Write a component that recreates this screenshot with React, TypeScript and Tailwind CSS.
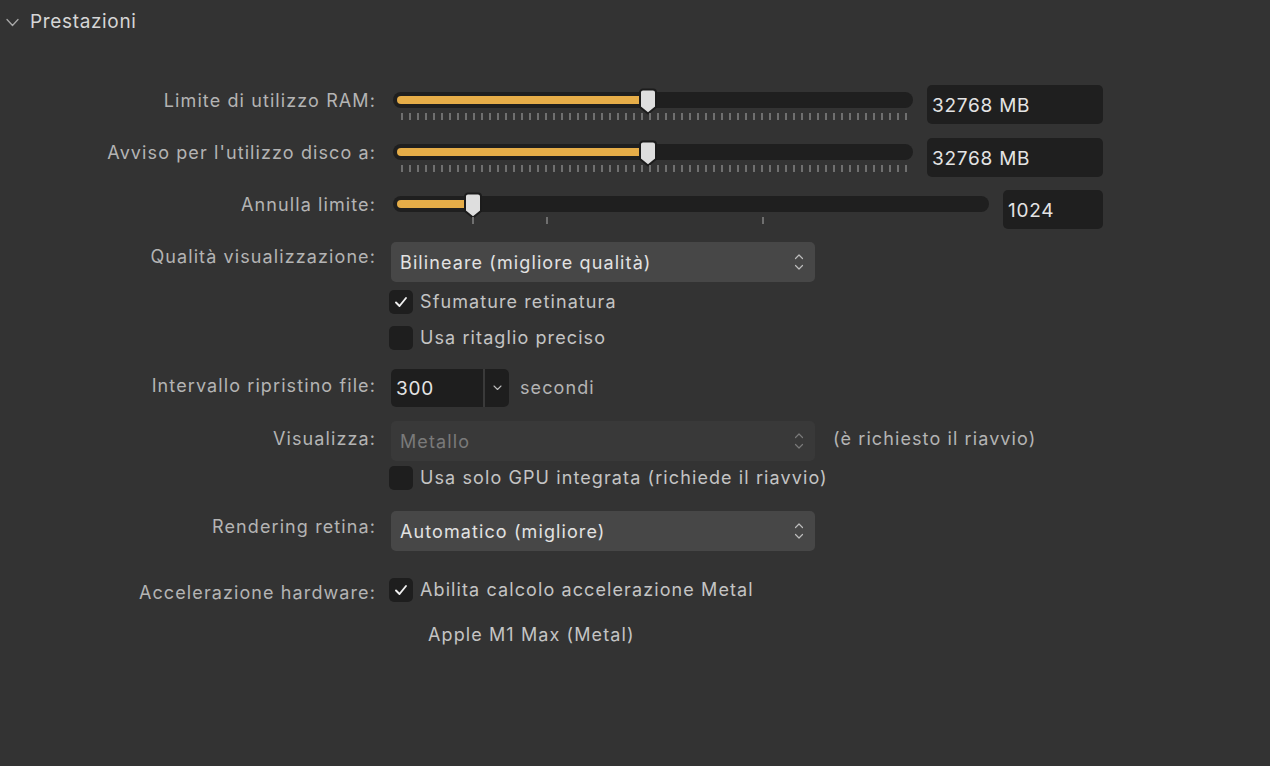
import React from "react";

const Thumb = () => (
  <svg width="18" height="27" viewBox="0 0 18 27" className="block">
    <path d="M4 1.5 H14 A3 3 0 0 1 17 4.5 V19 L9 25.5 L1 19 V4.5 A3 3 0 0 1 4 1.5 Z" fill="#dedede" stroke="#1c1c1c" strokeWidth="2" strokeLinejoin="round" />
  </svg>
);

const UpDown = ({ color = "#bdbdbd" }: { color?: string }) => (
  <svg width="10" height="18" viewBox="0 0 10 18" className="block">
    <path d="M1.5 5.5 L5 2 L8.5 5.5" fill="none" stroke={color} strokeWidth="1.2" strokeLinecap="round" strokeLinejoin="round" />
    <path d="M1.5 12.5 L5 16 L8.5 12.5" fill="none" stroke={color} strokeWidth="1.2" strokeLinecap="round" strokeLinejoin="round" />
  </svg>
);

const Check = () => (
  <svg width="14" height="12" viewBox="0 0 14 12" className="block">
    <path d="M2 6.5 L5.5 10 L12 2" fill="none" stroke="#f0f0f0" strokeWidth="1.9" strokeLinecap="round" strokeLinejoin="round" />
  </svg>
);

function Slider({ width, fill, ticks }: { width: number; fill: number; ticks: number[] }) {
  return (
    <div className="relative" style={{ width }}>
      <div className="h-[16px] rounded-full bg-[#1f1f1f] flex items-center px-[4px]">
        <div className="h-[8px] rounded-l-full bg-[#e6ad48]" style={{ width: fill - 4 }} />
      </div>
      <div className="absolute top-[-4px]" style={{ left: fill - 9 }}>
        <Thumb />
      </div>
      <div className="relative h-[8px] mt-[5px]">
        {ticks.map((t, i) => (
          <div key={i} className="absolute top-0 w-[2px] h-[7px] bg-[#6f6f6f]" style={{ left: t - 1 }} />
        ))}
      </div>
    </div>
  );
}

const Label = ({ children, pt }: { children: React.ReactNode; pt: number }) => (
  <div className="w-[376px] shrink-0 text-right text-[18px] leading-[22px] tracking-[1.1px] text-[#b4b4b4]" style={{ paddingTop: pt }}>
    {children}
  </div>
);

const CheckBox = ({ checked, label }: { checked: boolean; label: string }) => (
  <div className="flex items-center h-[24px]">
    <div className="w-[24px] h-[24px] rounded-[5px] bg-[#1e1e1e] flex items-center justify-center">
      {checked && <Check />}
    </div>
    <span className="ml-[7px] text-[18px] leading-[22px] tracking-[1.1px] text-[#c4c4c4]">{label}</span>
  </div>
);

const Dropdown = ({ text, disabled }: { text: string; disabled?: boolean }) => (
  <div
    className={
      "w-[424px] h-[40px] rounded-[5px] flex items-center justify-between pl-[9px] pr-[11px] " +
      (disabled ? "bg-[#393939]" : "bg-[#474747]")
    }
  >
    <span className={"text-[18px] leading-[22px] tracking-[1.1px] pt-[2px] " + (disabled ? "text-[#7a7a7a]" : "text-[#e2e2e2]")}>{text}</span>
    <UpDown color={disabled ? "#7a7a7a" : "#bdbdbd"} />
  </div>
);

const NumBox = ({ text, width }: { text: string; width: number }) => (
  <div className="h-[39px] rounded-[5px] bg-[#1f1f1f] flex items-center pl-[5px]" style={{ width }}>
    <span className="text-[19px] leading-[22px] tracking-[0.75px] text-[#e4e4e4] pt-[2px]">{text}</span>
  </div>
);

export default function App() {
  const bigTicks = Array.from({ length: 64 }, (_, i) => 9 + i * 8);
  return (
    <div className="w-[1270px] h-[766px] bg-[#333333] overflow-hidden font-['Inter',sans-serif] antialiased">
      <div className="flex items-center h-[44px] pl-[6px]">
        <svg width="13" height="9" viewBox="0 0 13 9" className="block">
          <path d="M1 1.5 L6.5 7.5 L12 1.5" fill="none" stroke="#a8a8a8" strokeWidth="1.3" strokeLinecap="round" strokeLinejoin="round" />
        </svg>
        <span className="ml-[11px] text-[19px] leading-[24px] tracking-[0.65px] text-[#d6d6d6]">Prestazioni</span>
      </div>

      <div className="flex flex-col">
        {/* RAM */}
        <div className="flex items-start h-[39px] mt-[41px]">
          <Label pt={5}>Limite di utilizzo RAM:</Label>
          <div className="ml-[17px] pt-[7px]">
            <Slider width={520} fill={255} ticks={bigTicks} />
          </div>
          <div className="ml-[14px]">
            <NumBox text="32768 MB" width={176} />
          </div>
        </div>

        {/* Disk */}
        <div className="flex items-start h-[39px] mt-[14px]">
          <Label pt={4}>Avviso per l'utilizzo disco a:</Label>
          <div className="ml-[17px] pt-[6px]">
            <Slider width={520} fill={255} ticks={bigTicks} />
          </div>
          <div className="ml-[14px]">
            <NumBox text="32768 MB" width={176} />
          </div>
        </div>

        {/* Undo */}
        <div className="flex items-start h-[38px] mt-[13px]">
          <Label pt={4}>Annulla limite:</Label>
          <div className="ml-[17px] pt-[6px]">
            <Slider width={596} fill={80} ticks={[80, 154, 370]} />
          </div>
          <div className="ml-[14px]">
            <NumBox text="1024" width={100} />
          </div>
        </div>

        {/* Quality */}
        <div className="flex items-start h-[40px] mt-[14px]">
          <Label pt={4}>Qualità visualizzazione:</Label>
          <div className="ml-[15px]">
            <Dropdown text="Bilineare (migliore qualità)" />
          </div>
        </div>
        <div className="flex mt-[8px]">
          <div className="w-[376px] shrink-0" />
          <div className="ml-[13px]">
            <CheckBox checked label="Sfumature retinatura" />
          </div>
        </div>
        <div className="flex mt-[12px]">
          <div className="w-[376px] shrink-0" />
          <div className="ml-[13px]">
            <CheckBox checked={false} label="Usa ritaglio preciso" />
          </div>
        </div>

        {/* Interval */}
        <div className="flex items-start h-[38px] mt-[19px]">
          <Label pt={6}>Intervallo ripristino file:</Label>
          <div className="ml-[15px] flex items-center h-[38px]">
            <div className="flex h-[38px] rounded-[5px] overflow-hidden bg-[#3a3a3a]">
              <div className="w-[92px] bg-[#1e1e1e] flex items-center pl-[5px]">
                <span className="text-[19px] leading-[22px] tracking-[0.75px] text-[#e4e4e4] pt-[2px]">300</span>
              </div>
              <div className="w-[24px] ml-[2px] bg-[#1e1e1e] flex items-center justify-center">
                <svg width="9" height="6" viewBox="0 0 9 6" className="block">
                  <path d="M1 1 L4.5 4.5 L8 1" fill="none" stroke="#bdbdbd" strokeWidth="1.1" strokeLinecap="round" strokeLinejoin="round" />
                </svg>
              </div>
            </div>
            <span className="ml-[11px] text-[18px] leading-[22px] tracking-[1.1px] text-[#b4b4b4]">secondi</span>
          </div>
        </div>

        {/* Display */}
        <div className="flex items-start h-[40px] mt-[14px]">
          <Label pt={7}>Visualizza:</Label>
          <div className="ml-[15px] flex items-center">
            <Dropdown text="Metallo" disabled />
            <span className="ml-[18px] text-[18px] leading-[22px] tracking-[1.1px] text-[#b4b4b4] pb-[4px]">(è richiesto il riavvio)</span>
          </div>
        </div>
        <div className="flex mt-[5px]">
          <div className="w-[376px] shrink-0" />
          <div className="ml-[13px]">
            <CheckBox checked={false} label="Usa solo GPU integrata (richiede il riavvio)" />
          </div>
        </div>

        {/* Retina */}
        <div className="flex items-start h-[40px] mt-[21px]">
          <Label pt={5}>Rendering retina:</Label>
          <div className="ml-[15px]">
            <Dropdown text="Automatico (migliore)" />
          </div>
        </div>

        {/* HW accel */}
        <div className="flex items-start mt-[27px]">
          <Label pt={4}>Accelerazione hardware:</Label>
          <div className="ml-[13px]">
            <CheckBox checked label="Abilita calcolo accelerazione Metal" />
          </div>
        </div>
        <div className="flex mt-[20px]">
          <div className="w-[376px] shrink-0" />
          <span className="ml-[52px] text-[18px] leading-[22px] tracking-[1.1px] text-[#c4c4c4]">Apple M1 Max (Metal)</span>
        </div>
      </div>
    </div>
  );
}
